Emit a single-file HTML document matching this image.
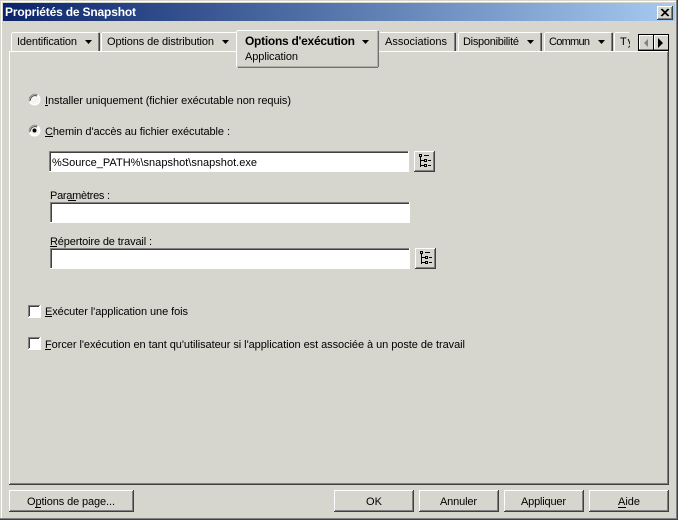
<!DOCTYPE html>
<html><head><meta charset="utf-8"><style>
html,body{margin:0;padding:0;width:678px;height:520px;overflow:hidden;background:#d6d5ce}
svg{display:block}
text{font-family:"Liberation Sans",sans-serif;font-size:11px;fill:#000}
.c{shape-rendering:crispEdges}
</style></head><body>
<svg width="678" height="520" viewBox="0 0 678 520" xmlns="http://www.w3.org/2000/svg">
<defs><linearGradient id="g" x1="0" x2="1" y1="0" y2="0"><stop offset="0" stop-color="#0a246a"/><stop offset="1" stop-color="#a6caf0"/></linearGradient>
<clipPath id="tc"><rect x="614" y="30" width="16" height="21"/></clipPath></defs>
<g class="c">
<rect width="678" height="520" fill="#d6d5ce"/>
<rect x="1" y="1" width="675" height="1" fill="#fff"/><rect x="1" y="1" width="1" height="517" fill="#fff"/>
<rect x="676" y="0" width="1" height="519" fill="#808080"/><rect x="0" y="518" width="677" height="1" fill="#808080"/>
<rect x="677" y="0" width="1" height="520" fill="#404040"/><rect x="0" y="519" width="678" height="1" fill="#404040"/>
<rect x="3" y="3" width="672" height="18" fill="url(#g)"/>
<!-- close -->
<rect x="657" y="6" width="16" height="14" fill="#404040"/><rect x="657" y="6" width="15" height="13" fill="#fff"/><rect x="658" y="7" width="14" height="12" fill="#808080"/><rect x="658" y="7" width="13" height="11" fill="#d6d5ce"/>
<!-- page -->
<rect x="9" y="51" width="660" height="434" fill="#404040"/><rect x="9" y="51" width="659" height="433" fill="#fff"/><rect x="10" y="52" width="657" height="431" fill="#d6d5ce"/>
<rect x="10" y="483" width="657" height="1" fill="#808080"/><rect x="667" y="52" width="1" height="432" fill="#808080"/>
<!-- tabs -->
<rect x="11" y="33" width="1" height="18" fill="#fff"/><rect x="12" y="32" width="86" height="1" fill="#fff"/><rect x="98" y="33" width="1" height="18" fill="#808080"/><rect x="99" y="33" width="1" height="18" fill="#404040"/>
<rect x="101" y="33" width="1" height="18" fill="#fff"/><rect x="102" y="32" width="134" height="1" fill="#fff"/>
<rect x="380" y="32" width="74" height="1" fill="#fff"/><rect x="454" y="33" width="1" height="18" fill="#808080"/><rect x="455" y="33" width="1" height="18" fill="#404040"/>
<rect x="458" y="33" width="1" height="18" fill="#fff"/><rect x="459" y="32" width="81" height="1" fill="#fff"/><rect x="540" y="33" width="1" height="18" fill="#808080"/><rect x="541" y="33" width="1" height="18" fill="#404040"/>
<rect x="544" y="33" width="1" height="18" fill="#fff"/><rect x="545" y="32" width="66" height="1" fill="#fff"/><rect x="611" y="33" width="1" height="18" fill="#808080"/><rect x="612" y="33" width="1" height="18" fill="#404040"/>
<rect x="614" y="33" width="1" height="18" fill="#fff"/><rect x="615" y="32" width="14" height="1" fill="#fff"/>
<!-- active tab -->
<rect x="236" y="30" width="143" height="38" fill="#d6d5ce"/>
<rect x="236" y="31" width="1" height="36" fill="#fff"/><rect x="237" y="30" width="140" height="1" fill="#fff"/>
<rect x="377" y="31" width="1" height="36" fill="#b0b0a8"/><rect x="378" y="31" width="1" height="36" fill="#707070"/>
<rect x="237" y="66" width="141" height="1" fill="#b0b0a8"/><rect x="238" y="67" width="140" height="1" fill="#707070"/>
<rect x="379" y="51" width="289" height="1" fill="#fff"/>
<!-- scroll buttons -->
<rect x="638" y="34" width="31" height="17" fill="#000"/><rect x="639" y="35" width="14" height="15" fill="#d6d5ce"/><rect x="654" y="35" width="14" height="15" fill="#d6d5ce"/>
<rect x="639" y="35" width="14" height="1" fill="#fff"/><rect x="639" y="35" width="1" height="15" fill="#fff"/><rect x="654" y="35" width="14" height="1" fill="#fff"/><rect x="654" y="35" width="1" height="15" fill="#fff"/>
<rect x="639" y="49" width="14" height="1" fill="#808080"/><rect x="654" y="49" width="14" height="1" fill="#808080"/>
<!-- inputs -->
<rect x="49" y="151" width="360" height="21" fill="#fff"/><rect x="49" y="151" width="359" height="1" fill="#808080"/><rect x="49" y="151" width="1" height="20" fill="#808080"/><rect x="50" y="152" width="358" height="1" fill="#404040"/><rect x="50" y="152" width="1" height="19" fill="#404040"/>
<rect x="50" y="202" width="360" height="21" fill="#fff"/><rect x="50" y="202" width="359" height="1" fill="#808080"/><rect x="50" y="202" width="1" height="20" fill="#808080"/><rect x="51" y="203" width="358" height="1" fill="#404040"/><rect x="51" y="203" width="1" height="19" fill="#404040"/>
<rect x="50" y="248" width="360" height="21" fill="#fff"/><rect x="50" y="248" width="359" height="1" fill="#808080"/><rect x="50" y="248" width="1" height="20" fill="#808080"/><rect x="51" y="249" width="358" height="1" fill="#404040"/><rect x="51" y="249" width="1" height="19" fill="#404040"/>
<!-- tree buttons -->
<g id="b1"><rect x="414" y="151" width="21" height="21" fill="#404040"/><rect x="414" y="151" width="20" height="20" fill="#fff"/><rect x="415" y="152" width="19" height="19" fill="#808080"/><rect x="415" y="152" width="18" height="18" fill="#d6d5ce"/>
<path d="M419 154h3v3h-3zM420 155v1h1v-1zM424 155h5v1h-5zM420 157h1v10h-1zM421 160h3v1h-3zM421 165h3v1h-3zM424 159h3v3h-3zM425 160v1h1v-1zM424 164h3v3h-3zM425 165v1h1v-1zM428 160h3v1h-3zM428 165h3v1h-3z" fill="#000" fill-rule="evenodd"/></g>
<use href="#b1" x="1" y="97"/>
<!-- buttons -->
<rect x="9" y="490" width="125" height="22" fill="#404040"/><rect x="9" y="490" width="124" height="21" fill="#fff"/><rect x="10" y="491" width="123" height="20" fill="#808080"/><rect x="10" y="491" width="122" height="19" fill="#d6d5ce"/>
<rect x="334" y="490" width="80" height="22" fill="#404040"/><rect x="334" y="490" width="79" height="21" fill="#fff"/><rect x="335" y="491" width="78" height="20" fill="#808080"/><rect x="335" y="491" width="77" height="19" fill="#d6d5ce"/>
<rect x="419" y="490" width="80" height="22" fill="#404040"/><rect x="419" y="490" width="79" height="21" fill="#fff"/><rect x="420" y="491" width="78" height="20" fill="#808080"/><rect x="420" y="491" width="77" height="19" fill="#d6d5ce"/>
<rect x="504" y="490" width="80" height="22" fill="#404040"/><rect x="504" y="490" width="79" height="21" fill="#fff"/><rect x="505" y="491" width="78" height="20" fill="#808080"/><rect x="505" y="491" width="77" height="19" fill="#d6d5ce"/>
<rect x="589" y="490" width="80" height="22" fill="#404040"/><rect x="589" y="490" width="79" height="21" fill="#fff"/><rect x="590" y="491" width="78" height="20" fill="#808080"/><rect x="590" y="491" width="77" height="19" fill="#d6d5ce"/>
<!-- checkboxes -->
<rect x="28" y="305" width="13" height="13" fill="#fff"/><rect x="28" y="305" width="12" height="1" fill="#808080"/><rect x="28" y="305" width="1" height="12" fill="#808080"/><rect x="29" y="306" width="10" height="1" fill="#404040"/><rect x="29" y="306" width="1" height="10" fill="#404040"/>
<rect x="28" y="337" width="13" height="13" fill="#fff"/><rect x="28" y="337" width="12" height="1" fill="#808080"/><rect x="28" y="337" width="1" height="12" fill="#808080"/><rect x="29" y="338" width="10" height="1" fill="#404040"/><rect x="29" y="338" width="1" height="10" fill="#404040"/>
<!-- underlines -->
<rect x="45" y="105" width="3" height="1"/><rect x="45" y="136" width="8" height="1"/><rect x="68" y="200" width="8" height="1"/><rect x="50" y="246" width="7" height="1"/><rect x="45" y="316" width="7" height="1"/><rect x="45" y="349" width="6" height="1"/><rect x="35" y="507" width="6" height="1"/><rect x="618" y="507" width="8" height="1"/>
</g>
<!-- close X -->
<path d="M661 9l7 7M662 9l7 7M668 9l-7 7M669 9l-7 7" stroke="#000" fill="none" stroke-width="1"/>
<!-- arrows -->
<path d="M85 40h7l-3.500 4zM222 40h7l-3.500 4zM362 40h7l-3.500 4zM527 40h7l-3.500 4zM598 40h7l-3.500 4z"/>
<path d="M648 39v8l-4-4z" fill="#808080"/>
<path d="M658 38v10l5-5z"/>
<!-- radios -->
<circle cx="34.500" cy="99.500" r="6" fill="#fff"/><circle cx="34.500" cy="99.500" r="4.500" fill="#f4f4f0"/><path d="M29.500 101.500a5.500 5.500 0 0 1 8-6.500" fill="none" stroke="#808080"/><path d="M30.500 100.500a4.500 4.500 0 0 1 6.500-4.500" fill="none" stroke="#505050"/>
<circle cx="34.500" cy="130.500" r="6" fill="#fff"/><circle cx="34.500" cy="130.500" r="4.500" fill="#f4f4f0"/><path d="M29.500 132.500a5.500 5.500 0 0 1 8-6.500" fill="none" stroke="#808080"/><path d="M30.500 131.500a4.500 4.500 0 0 1 6.500-4.500" fill="none" stroke="#505050"/><circle cx="34.500" cy="130.500" r="2"/>
<!-- text -->
<text x="5" y="16" font-weight="bold" style="fill:#fff;font-size:12px" textLength="131" lengthAdjust="spacing">Propriétés de Snapshot</text>
<text x="17" y="45" textLength="60" lengthAdjust="spacing">Identification</text>
<text x="107" y="45" textLength="107" lengthAdjust="spacing">Options de distribution</text>
<text x="245" y="45" font-weight="bold" style="font-size:12px" textLength="110" lengthAdjust="spacing">Options d'exécution</text>
<text x="245" y="60" textLength="53" lengthAdjust="spacing">Application</text>
<text x="385" y="45" textLength="62" lengthAdjust="spacing">Associations</text>
<text x="463" y="45" textLength="56" lengthAdjust="spacing">Disponibilité</text>
<text x="549" y="45" textLength="41" lengthAdjust="spacing">Commun</text>
<text x="620" y="45" clip-path="url(#tc)" letter-spacing="1.500">Types</text>
<text x="45" y="104" textLength="246" lengthAdjust="spacing">Installer uniquement (fichier exécutable non requis)</text>
<text x="45" y="135" textLength="185" lengthAdjust="spacing">Chemin d'accès au fichier exécutable :</text>
<text x="52" y="166" textLength="205" lengthAdjust="spacing">%Source_PATH%\snapshot\snapshot.exe</text>
<text x="50" y="199" textLength="60" lengthAdjust="spacing">Paramètres :</text>
<text x="50" y="245" textLength="102" lengthAdjust="spacing">Répertoire de travail :</text>
<text x="45" y="315" textLength="143" lengthAdjust="spacing">Exécuter l'application une fois</text>
<text x="45" y="348" textLength="420" lengthAdjust="spacing">Forcer l'exécution en tant qu'utilisateur si l'application est associée à un poste de travail</text>
<text x="27" y="505" textLength="88" lengthAdjust="spacing">Options de page...</text>
<text x="366" y="505" textLength="16" lengthAdjust="spacing">OK</text>
<text x="440" y="505" textLength="37" lengthAdjust="spacing">Annuler</text>
<text x="521" y="505" textLength="45" lengthAdjust="spacing">Appliquer</text>
<text x="618" y="505" textLength="22" lengthAdjust="spacing">Aide</text>
</svg>
</body></html>
